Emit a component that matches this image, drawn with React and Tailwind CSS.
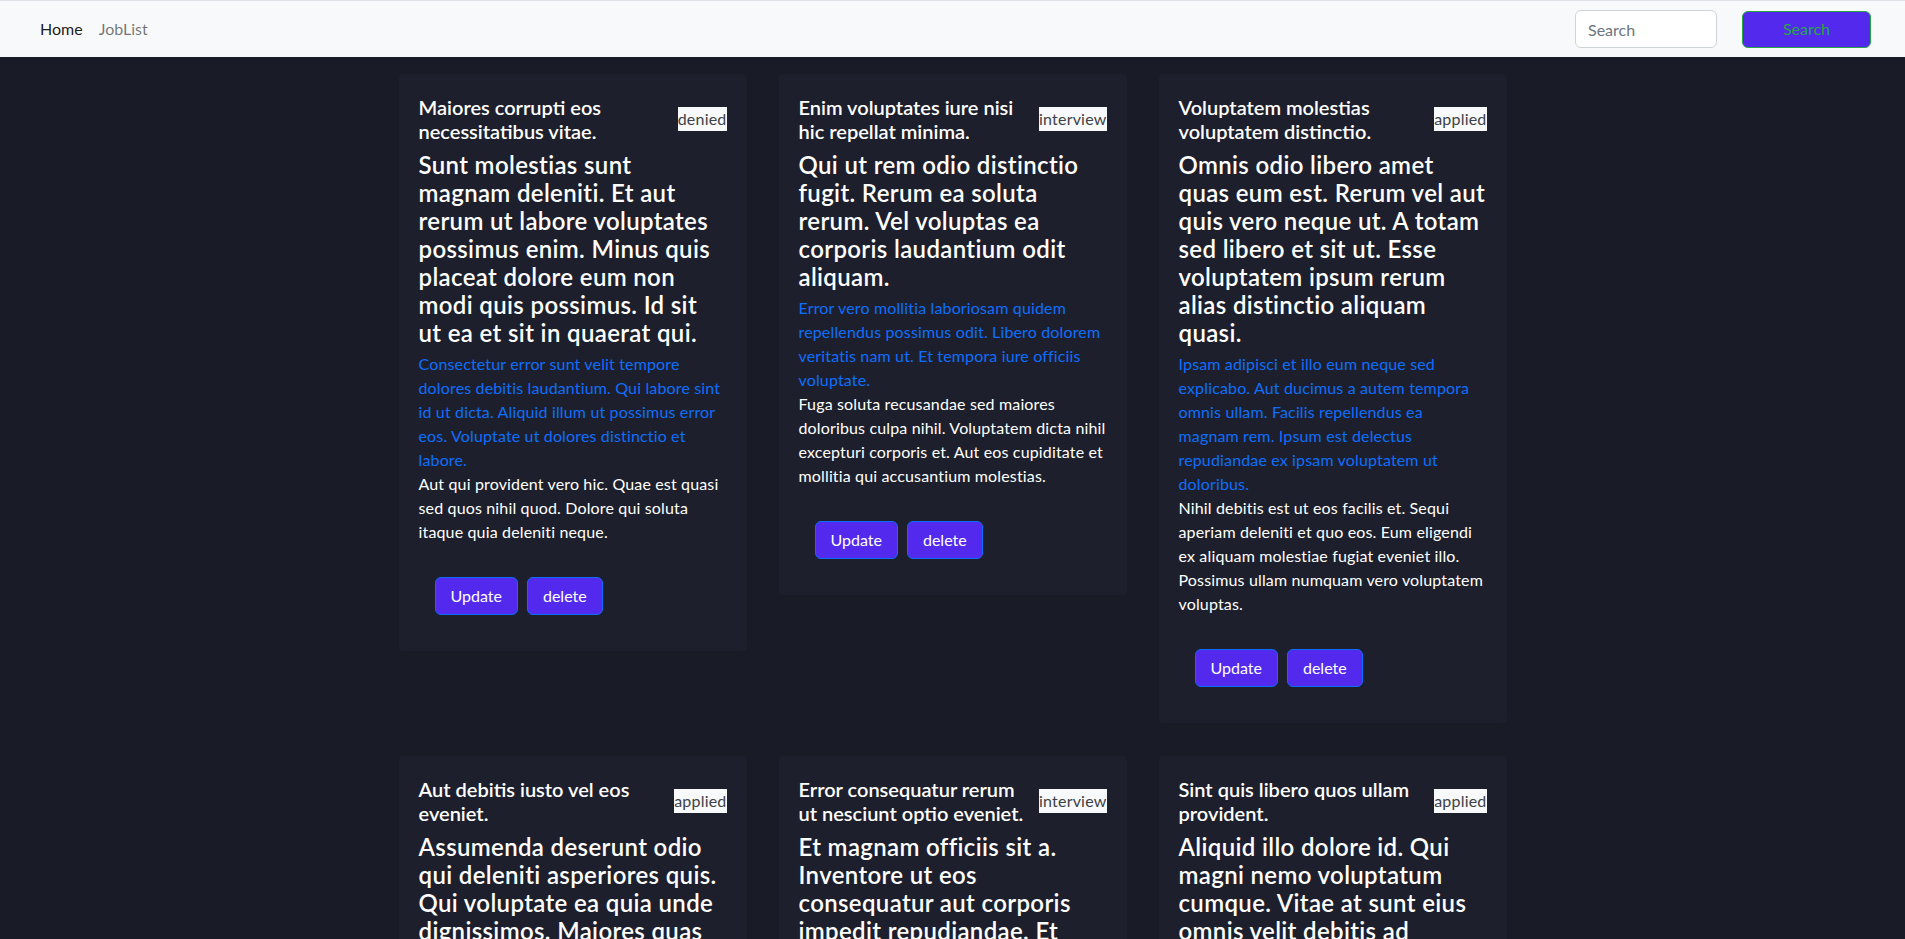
import React from 'react';

const jobs = [
  {
    title: 'Maiores corrupti eos necessitatibus vitae.',
    status: 'denied',
    heading:
      'Sunt molestias sunt magnam deleniti. Et aut rerum ut labore voluptates possimus enim. Minus quis placeat dolore eum non modi quis possimus. Id sit ut\u00a0ea et sit in quaerat qui.',
    company:
      'Consectetur error sunt velit tempore dolores debitis laudantium. Qui labore sint id ut dicta. Aliquid illum ut possimus error eos. Voluptate ut dolores distinctio et labore.',
    body: 'Aut qui provident vero hic. Quae est quasi sed quos nihil quod. Dolore qui soluta itaque quia deleniti neque.',
  },
  {
    title: 'Enim voluptates iure nisi hic repellat minima.',
    status: 'interview',
    heading:
      'Qui ut rem odio distinctio fugit. Rerum ea soluta rerum. Vel voluptas ea corporis laudantium odit aliquam.',
    company:
      'Error vero mollitia laboriosam quidem repellendus possimus odit. Libero dolorem veritatis nam ut. Et tempora iure officiis voluptate.',
    body: 'Fuga soluta recusandae sed maiores doloribus culpa nihil. Voluptatem dicta nihil excepturi corporis et. Aut eos cupiditate et mollitia qui accusantium molestias.',
  },
  {
    title: 'Voluptatem molestias voluptatem distinctio.',
    status: 'applied',
    heading:
      'Omnis odio libero amet quas eum est. Rerum vel aut quis vero neque ut. A totam sed libero et sit ut. Esse voluptatem ipsum rerum alias distinctio aliquam quasi.',
    company:
      'Ipsam adipisci et illo eum neque sed explicabo. Aut ducimus a autem tempora omnis ullam. Facilis repellendus ea magnam rem. Ipsum est delectus repudiandae ex ipsam voluptatem ut doloribus.',
    body: 'Nihil debitis est ut eos facilis et. Sequi aperiam deleniti et quo eos. Eum eligendi ex aliquam molestiae fugiat eveniet illo. Possimus ullam numquam vero voluptatem voluptas.',
  },
  {
    title: 'Aut debitis iusto vel eos eveniet.',
    status: 'applied',
    heading:
      'Assumenda deserunt odio qui deleniti asperiores quis. Qui voluptate ea quia unde dignissimos. Maiores quas rerum dolor et.',
    company:
      'Quia et voluptas ut quidem ipsa. Dolorem aut sit voluptates rerum. Rerum quod illum accusamus.',
    body: 'Sed nesciunt rerum fugit qui. Omnis nihil ut quis. Magni odit quia et eos ut.',
  },
  {
    title: 'Error consequatur rerum ut nesciunt optio eveniet.',
    status: 'interview',
    heading:
      'Et magnam officiis sit a. Inventore ut eos consequatur aut corporis impedit repudiandae. Et eum quaerat animi.',
    company:
      'Ut quaerat aut ipsum et. Non tempora et quasi illo sint. Voluptas sed eius est nulla.',
    body: 'Accusamus voluptatem sit et dolor. Ut non ex dolor quia. Minima et sed aut.',
  },
  {
    title: 'Sint quis libero quos ullam provident.',
    status: 'applied',
    heading:
      'Aliquid illo dolore id. Qui magni nemo voluptatum cumque. Vitae at sunt eius omnis velit debitis ad voluptatibus.',
    company:
      'Molestiae dolor aut quis eum. Ipsa sit perferendis est. Aut rerum sint voluptas.',
    body: 'Est dolore ipsum et. Laborum ut rerum dolor omnis. Ut velit facere dolores.',
  },
];

const JobCard = ({ job }) => (
  <div className="rounded bg-[#1d202c] px-5 pt-[21px] pb-9">
    <div className="mb-2 flex items-center justify-between gap-3">
      <h5 className="text-[20px] leading-[24px] font-semibold text-white">{job.title}</h5>
      <span className="flex-none bg-[#f8f9fa] text-[16px] leading-[24px] tracking-[0.2px] text-[#3d4247]">
        {job.status}
      </span>
    </div>
    <h4 className="mb-[5px] text-[24px] leading-[28px] font-semibold tracking-[0.35px] text-white">
      {job.heading}
    </h4>
    <p className="text-[16px] leading-6 tracking-[0.15px] text-[#0d6efd]">{job.company}</p>
    <p className="text-[16px] leading-6 tracking-[0.15px] text-white">{job.body}</p>
    <div className="mt-[33px] flex gap-[9px] pl-4">
      <button className="h-[38px] rounded-md border border-[#0d6efd] bg-[#5229ed] px-[15px] text-[16px] text-white">
        Update
      </button>
      <button className="h-[38px] rounded-md border border-[#0d6efd] bg-[#5229ed] px-[15px] text-[16px] text-white">
        delete
      </button>
    </div>
  </div>
);

const App = () => (
  <div className="min-h-screen bg-[#191c27] font-['Lato',sans-serif]">
    <nav className="flex h-[57px] items-center justify-between border-t border-[#dee2e6] bg-[#f8f9fa] pl-8 pr-[34px]">
      <div className="flex text-[16px]">
        <a className="px-2 py-2 text-black/90">Home</a>
        <a className="px-2 py-2 text-black/55">JobList</a>
      </div>
      <form className="flex items-center gap-[25px]">
        <input
          placeholder="Search"
          className="h-[38px] w-[142px] rounded-md border border-[#ced4da] bg-white px-3 text-[16px] placeholder:text-[#6c757d]"
        />
        <button
          type="button"
          className="h-[37px] w-[129px] rounded-md border border-[#28a745] bg-[#5229ed] text-[16px] text-[#28a745]"
        >
          Search
        </button>
      </form>
    </nav>
    <main className="mx-auto grid w-[1108px] grid-cols-3 items-start gap-x-8 gap-y-[33px] pt-[17px] pb-10">
      {jobs.map((job, i) => (
        <JobCard key={i} job={job} />
      ))}
    </main>
  </div>
);

export default App;
